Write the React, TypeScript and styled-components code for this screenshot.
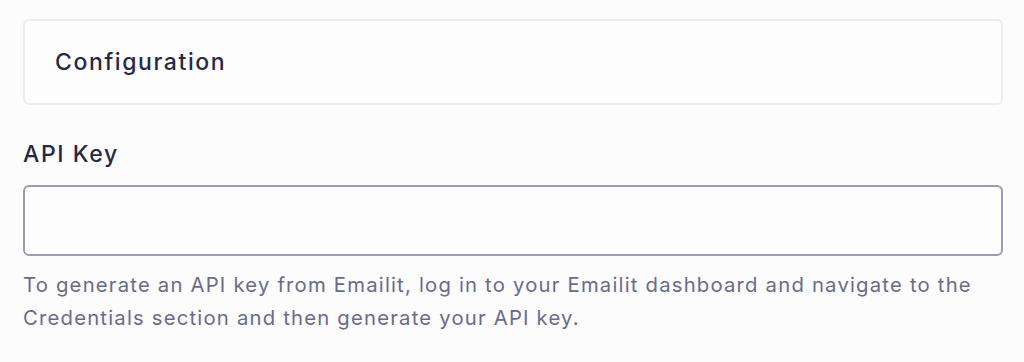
import React from "react";
import styled, { createGlobalStyle } from "styled-components";

const Global = createGlobalStyle`
  html, body { margin: 0; padding: 0; background: #fcfcfd; }
  body { font-family: Inter, "Noto Sans", sans-serif; -webkit-font-smoothing: antialiased; }
`;

const Page = styled.div`
  padding: 19px 21px 0 23px;
  display: flex;
  flex-direction: column;
`;

const Card = styled.section`
  height: 86px;
  box-sizing: border-box;
  border: 2px solid #ebebf0;
  border-radius: 6px;
  background: #fdfdfe;
  display: flex;
  align-items: center;
  padding: 0 30px;
`;

const CardTitle = styled.h2`
  margin: 0;
  font-size: 23px;
  font-weight: 500;
  color: #262946;
  letter-spacing: 1.6px;
`;

const Field = styled.div`
  margin-top: 33px;
  display: flex;
  flex-direction: column;
`;

const Label = styled.label`
  font-size: 23px;
  font-weight: 500;
  color: #262946;
  line-height: 32px;
  letter-spacing: 1.6px;
`;

const Input = styled.input`
  margin-top: 15px;
  height: 71px;
  box-sizing: border-box;
  border: 2px solid #9b9cb5;
  border-radius: 6px;
  background: #fdfdfe;
  outline: none;
  padding: 0 16px;
  font: inherit;
  font-size: 20px;
`;

const Help = styled.p`
  margin: 12px 0 0;
  font-size: 20.3px;
  line-height: 33px;
  letter-spacing: 1.2px;
  color: #696b8b;
`;

export default function App() {
  return (
    <>
      <Global />
      <Page>
        <Card>
          <CardTitle>Configuration</CardTitle>
        </Card>
        <Field>
          <Label htmlFor="api-key">API Key</Label>
          <Input id="api-key" type="text" />
          <Help>
            To generate an API key from Emailit, log in to your Emailit dashboard and navigate to the
            Credentials section and then generate your API key.
          </Help>
        </Field>
      </Page>
    </>
  );
}
